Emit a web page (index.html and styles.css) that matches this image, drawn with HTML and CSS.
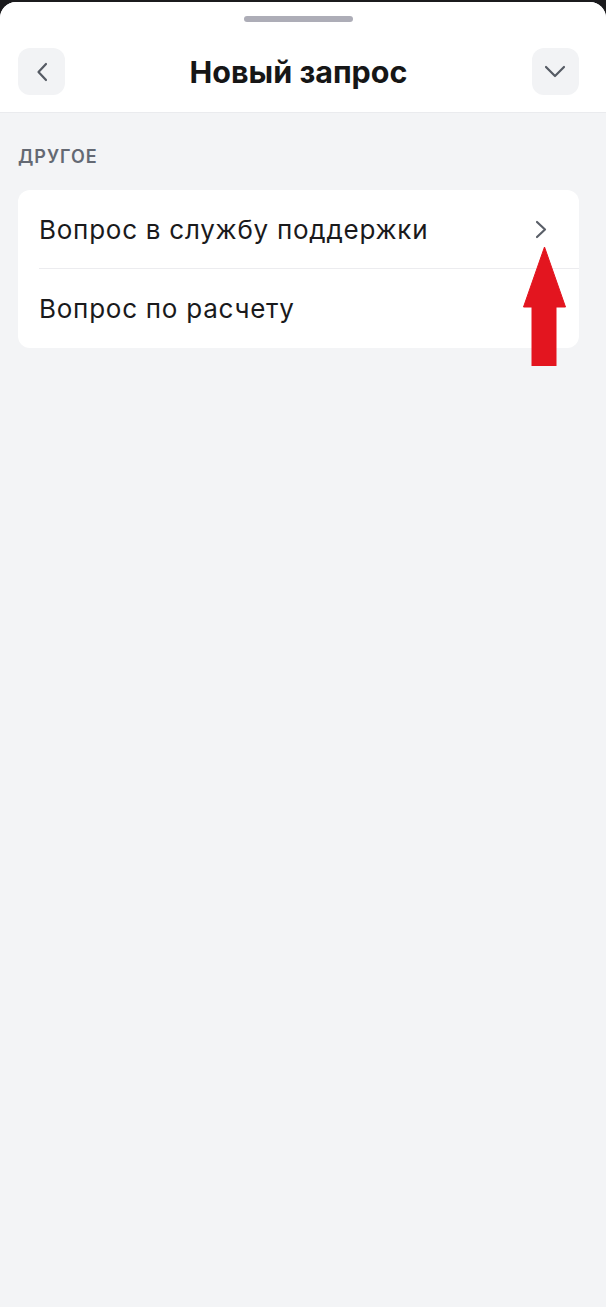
FILE: index.html
```
<!DOCTYPE html>
<html lang="ru">
<head>
  <meta charset="UTF-8">
  <title>Новый запрос</title>
  <meta name="viewport" content="width=device-width, initial-scale=1.0">
  <link rel="stylesheet" href="styles.css">
</head>
<body>

  <div class="sheet">
    <!-- Шапка со шторкой и кнопками -->
    <div class="sheet-top">
      <div class="handle"></div>
      <div class="header">
        <button class="icon-btn" aria-label="Назад">
          <svg width="12" height="20" viewBox="0 0 12 20"><path d="M10 2L2.5 10L10 18" /></svg>
        </button>
        <h1 class="title">Новый запрос</h1>
        <button class="icon-btn" aria-label="Свернуть">
          <svg width="22" height="13" viewBox="0 0 22 13"><path d="M2 2L11 11L20 2" /></svg>
        </button>
      </div>
    </div>

    <!-- Список категорий -->
    <div class="content">
      <div class="section-label">Другое</div>
      <div class="card">
        <a href="#" class="row">
          <span class="row-inner">
            <span class="row-text">Вопрос в службу поддержки</span>
            <svg class="chevron" width="12" height="19" viewBox="0 0 12 19"><path d="M2 2L10 9.5L2 17" /></svg>
          </span>
        </a>
        <a href="#" class="row">
          <span class="row-inner">
            <span class="row-text">Вопрос по расчету</span>
          </span>
        </a>

        <!-- Красная стрелка-указатель поверх карточки -->
        <svg class="pointer" width="43" height="119" viewBox="0 0 43 119">
          <path d="M21.5 0L0.5 60H9V119H33V60H42.5Z" />
        </svg>
      </div>
    </div>
  </div>

</body>
</html>
```

FILE: styles.css
```
* {
  margin: 0;
  padding: 0;
  box-sizing: border-box;
}
body {
  font-family: Inter, "Noto Sans", sans-serif;
  background: #1b1b1d;
  color: #1b1b1d;
}
a {
  color: inherit;
  text-decoration: none;
}

/* Шторка (bottom sheet) */
.sheet {
  margin-top: 2px;
  min-height: 1305px;
  background: #f3f4f6;
  border-radius: 16px 16px 0 0;
  overflow: hidden;
}
.sheet-top {
  background: #fff;
  padding: 14px 27px 17px 18px;
  border-bottom: 1px solid #eaebee;
}
.handle {
  width: 109px;
  height: 6px;
  margin: 0 auto 26px;
  border-radius: 3px;
  background: #adadb7;
}
.header {
  display: flex;
  align-items: center;
  justify-content: space-between;
}
.title {
  font-size: 30.5px;
  font-weight: 700;
  color: #161616;
}
.icon-btn {
  width: 47px;
  height: 47px;
  border: none;
  border-radius: 12px;
  background: #f2f3f5;
  display: flex;
  align-items: center;
  justify-content: center;
}
.icon-btn svg path {
  fill: none;
  stroke: #565b64;
  stroke-width: 2.2;
  stroke-linecap: round;
  stroke-linejoin: round;
}

/* Контент */
.content {
  padding: 33px 27px 0 18px;
}
.section-label {
  font-size: 18px;
  line-height: 22px;
  font-weight: 600;
  text-transform: uppercase;
  color: #646973;
  letter-spacing: 1px;
  margin-bottom: 22px;
}
.card {
  position: relative;
  background: #fff;
  border-radius: 12px;
}
.row {
  display: block;
  padding-left: 21px;
}
.row-inner {
  display: flex;
  align-items: center;
  justify-content: space-between;
  height: 79px;
  padding-right: 32px;
}
.row:first-child .row-inner {
  border-bottom: 1px solid #ececef;
}
.row-text {
  font-size: 26px;
  letter-spacing: 0.75px;
  color: #1a1a1c;
}
.chevron path {
  fill: none;
  stroke: #5a5f68;
  stroke-width: 2.2;
  stroke-linecap: round;
  stroke-linejoin: round;
}

/* Аннотация-стрелка */
.pointer {
  position: absolute;
  left: 505px;
  top: 57px;
}
.pointer path {
  fill: #e3151f;
  stroke: #e3151f;
  stroke-width: 1;
  stroke-linejoin: round;
}
```
